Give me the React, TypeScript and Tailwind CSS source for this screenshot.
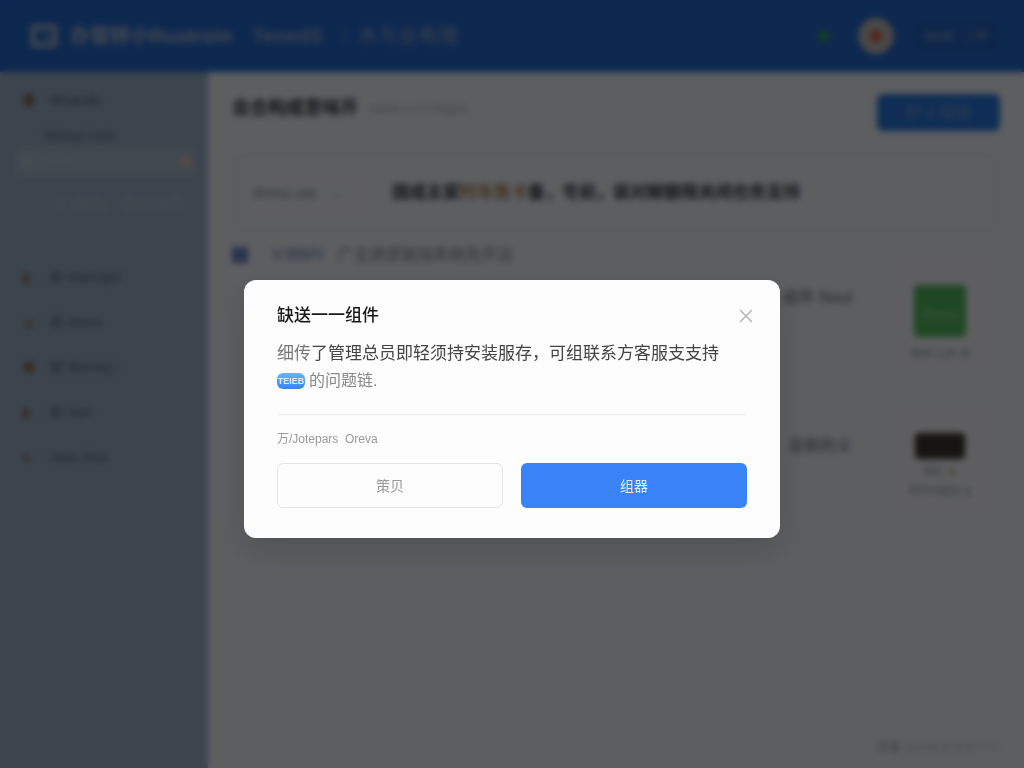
import React from 'react';
import { X } from 'lucide-react';

interface NavItem {
  label: string;
  icon: string;
}

const NAV_ITEMS: NavItem[] = [
  { label: '新 Mansgoi', icon: '▮' },
  { label: '新 Mons', icon: '▲' },
  { label: '新 Bioneg i', icon: '◆' },
  { label: '新 Non', icon: '▮' },
  { label: 'Stan Ros', icon: '●' },
];

const LogoIcon: React.FC = () => (
  <svg className="h-6 w-7" viewBox="0 0 28 24" fill="none" stroke="#aab4c6" strokeWidth="5">
    <rect x="3" y="3" width="22" height="18" rx="2" />
    <path d="M14 10 L19 15" strokeWidth="3" />
  </svg>
);

const Header: React.FC = () => (
  <header className="flex h-[72px] items-center justify-between bg-[#2164c6] pr-6 pl-[30px] text-[#a9b5ca]">
    <div className="flex items-center">
      <LogoIcon />
      <span className="ml-3 w-[182px] text-xl font-bold whitespace-nowrap">办管转小Rustroin</span>
      <span className="w-[90px] text-xl font-bold text-[#8fa3c6]">TenedS</span>
      <span className="w-4 text-xl text-[#7088b0]">/</span>
      <span className="text-xl text-[#8fa3c6]">水与业有理</span>
    </div>
    <div className="flex items-center">
      <span className="h-3 w-3 rounded-full bg-[#2f9f62]" />
      <span className="ml-7 flex h-9 w-9 items-center justify-center rounded-full bg-[#bdb5b4]">
        <span className="h-3 w-3 rounded-full bg-[#cf5c40]" />
      </span>
      <button className="ml-[18px] flex h-8 w-[88px] items-center justify-between rounded-full bg-[#225fb8] px-3 text-xs">
        <span>monit</span>
        <span className="text-[#9a9db3]">二中</span>
      </button>
    </div>
  </header>
);

const Sidebar: React.FC = () => (
  <aside className="w-[208px] shrink-0 bg-[#96aac1] px-3 pt-4 text-sm text-[#586a81]">
    <a href="#" className="flex h-6 items-center gap-4 pl-[10px]">
      <span className="w-3 text-[#75624d]">◆</span>
      <span className="text-[#4e6078]">Wsandn</span>
    </a>
    <label htmlFor="search" className="mt-3 block h-6 pl-8 text-xs leading-6">Mnnagt mont</label>
    <div className="ml-1 flex h-7 items-center justify-between rounded bg-[#a4b3c7] px-1">
      <input id="search" defaultValue="氧上一一" className="w-28 bg-transparent text-sm text-[#c2cad4]" />
      <span className="h-3 w-3 rounded-full bg-[#d0b8ae]" />
    </div>
    <p className="mt-4 h-6 pl-10 text-base leading-6 whitespace-nowrap text-[#afbdce]">下 持拍、值对目用</p>
    <nav className="mt-[38px] flex flex-col">
      {NAV_ITEMS.map((item) => (
        <a key={item.label} href="#" className="flex h-[45px] items-center gap-4 pl-[10px]">
          <span className="w-3 text-[#85694b]">{item.icon}</span>
          <span>{item.label}</span>
        </a>
      ))}
    </nav>
  </aside>
);

const Content: React.FC = () => (
  <main className="flex min-w-0 flex-1 flex-col bg-[#e7ebf1] px-6 pt-[22px] text-[#454a52]">
    <div className="flex items-start justify-between">
      <div className="flex h-7 items-center gap-3">
        <h1 className="text-lg font-bold text-[#33373d]">会合构成意味开</h1>
        <span className="text-sm text-[#a9adb4]">www.n.r.f.rlsgcs</span>
      </div>
      <button className="h-[37px] w-[123px] rounded-md bg-[#2672d4] text-base text-[#779bcf]">护 1 级银</button>
    </div>

    <section className="mt-[22px] flex h-20 items-center rounded-lg border-4 border-[#dde4ec] px-3">
      <select aria-label="筛选" className="h-12 w-[120px] appearance-none rounded bg-[#eaecf0] px-1 text-sm text-[#7c8087]">
        <option>Shinsi.usb　⌵</option>
      </select>
      <p className="ml-6 text-[17px] font-bold whitespace-nowrap text-[#383d44]">
        国成主家<span className="text-[#a6824f]">时车售卡</span>备，号前，装对解额限关闭也务支持
      </p>
    </section>

    <div className="mt-2 flex gap-7">
      <div className="min-w-0 flex-1">
        <p className="flex h-7 items-center text-base whitespace-nowrap text-[#787e87]">
          <span className="mr-6 h-4 w-4 bg-[#6686be]" />
          <span className="mr-3 text-[#637baa]">VJBMY</span>
          <span>广主进部装加系统及开议</span>
        </p>
        <p className="mt-1 flex h-[50px] items-center justify-end text-base text-[#60656d]">组件 Noul</p>
        <p className="mt-[98px] flex h-[50px] items-center justify-end text-base text-[#60656d]">显新的义</p>
      </div>
      <div className="flex w-[120px] flex-col gap-5 pt-1 text-center text-xs text-[#858991]">
        <div className="flex h-[136px] flex-col items-center rounded-lg border-4 border-[#dde4ec] bg-[#ebecef] pt-9">
          <span className="flex h-[52px] w-[52px] items-center justify-center rounded bg-[#50b25a] pt-2 text-xs text-[#a4d6ab]">Banka</span>
          <span className="mt-2">Mah Lon al</span>
        </div>
        <div className="flex h-[118px] flex-col items-center rounded-lg border-4 border-[#dde4ec] bg-[#ebecef] pt-7">
          <span className="h-[26px] w-[50px] rounded-sm bg-[#37342f]" />
          <span className="mt-1">Bitt. <span className="text-[#a4824f]">●</span></span>
          <span className="mt-1">PITHSED a</span>
        </div>
      </div>
    </div>
    <p className="mt-auto pb-3 text-right text-xs text-[#c2c6cc]"><b className="text-[#aeb3ba]">开发</b> 系统版本管理平台</p>
  </main>
);

const Dialog: React.FC = () => (
  <div
    role="dialog"
    aria-labelledby="dialog-title"
    className="w-full max-w-[536px] rounded-xl bg-[#fdfdfd] px-[33px] pt-6 pb-[30px] shadow-[0_12px_32px_rgba(0,0,0,0.15)]"
  >
    <div className="flex h-6 items-center justify-between">
      <h2 id="dialog-title" className="text-[17px] leading-6 font-medium text-[#181818]">缺送一一组件</h2>
      <button aria-label="关闭" className="-mr-[14px] p-1 text-[#b0b0b0]">
        <X size={22} strokeWidth={1.5} />
      </button>
    </div>
    <p className="mt-3 text-[17px] leading-[27px] text-[#444]">
      <span className="text-[#777]">细传</span>了管理总员即轻须持安装服存，可组联系方客服支支持
      <span className="flex items-center gap-1 text-base leading-[27px] text-[#888]">
        <span className="flex h-4 w-7 items-center justify-center rounded-md bg-linear-to-b from-[#69b3fa] to-[#3585ef] text-[9px] leading-4 font-bold text-[#d9ecff]">TEIEB</span>
        的问题链.
      </span>
    </p>
    <hr className="mt-5 border-[#eee]" />
    <p className="mt-4 text-xs leading-4 text-[#999]">万/Jotepars&nbsp; Oreva</p>
    <div className="mt-4 grid grid-cols-2 gap-[18px]">
      <button className="h-[45px] rounded-md border border-[#e4e4e4] text-sm text-[#999]">策贝</button>
      <button className="h-[45px] rounded-md bg-[#3884f6] text-sm text-[#e4efff]">组器</button>
    </div>
  </div>
);

export default function App() {
  return (
    <div className="flex min-h-screen flex-col font-['Liberation_Sans','Noto_Sans_CJK_SC',sans-serif]">
      <Header />
      <div className="flex flex-1">
        <Sidebar />
        <Content />
      </div>
      {/* Modal overlay */}
      <div className="fixed inset-0 flex items-center justify-center bg-black/60 px-4 pt-[50px] backdrop-blur-[3px]">
        <Dialog />
      </div>
    </div>
  );
}
